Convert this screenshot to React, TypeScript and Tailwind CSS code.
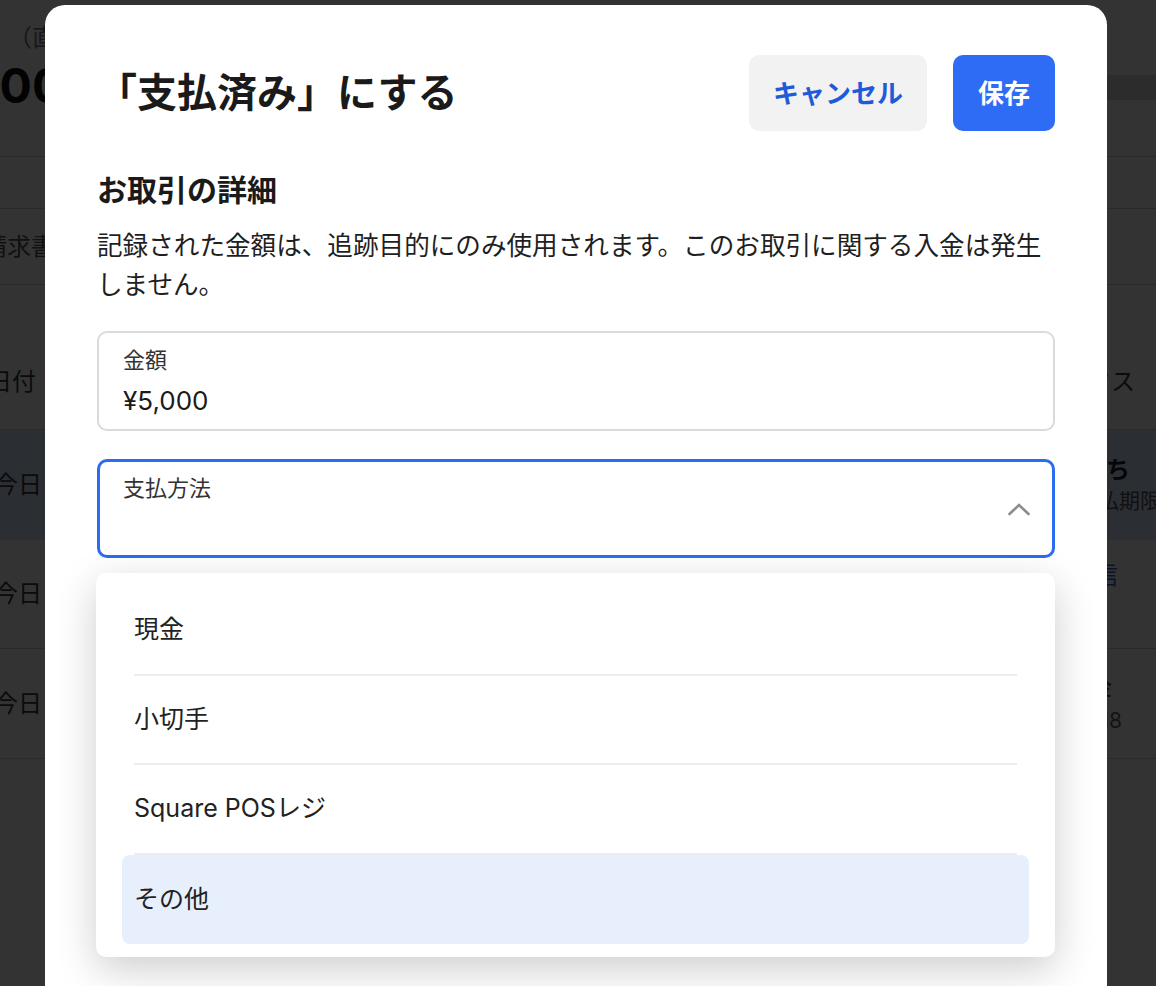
import { useState } from "react";

const FONT = "font-['Inter','Noto_Sans_CJK_JP',sans-serif]";

const paymentMethods = ["現金", "小切手", "Square POSレジ", "その他"];

function BackgroundPage() {
  return (
    <div className="w-full text-[#3a3a3a]">
      {/* Summary header */}
      <div className="flex h-[157px] justify-between border-b border-[#cfcfcf]">
        <div className="pt-[22px]">
          <p className="ml-[8px] text-[24px] leading-[32px] text-[#777]">（直近30日間）</p>
          <p className="-ml-[72px] mt-[4px] text-[48px] font-bold leading-[56px] text-[#111]">
            ¥5,000
          </p>
        </div>
        <div className="mt-[75px] h-[25px] w-[320px] bg-[#dcdcdc]" />
      </div>

      {/* Tabs */}
      <div className="h-[52px] border-b border-[#cfcfcf]" />
      <div className="flex h-[76px] items-center border-b border-[#cfcfcf]">
        <span className="-ml-[17px] text-[24px] text-[#555]">請求書</span>
      </div>

      {/* Table header */}
      <div className="mt-[49px] flex h-[96px] items-center justify-between border-b border-[#cfcfcf]">
        <span className="-ml-[12px] text-[24px]">日付</span>
        <span className="mr-[21px] text-[24px]">ステータス</span>
      </div>

      {/* Rows */}
      <div className="flex h-[110px] items-center justify-between bg-[#d6e4ff]">
        <span className="-ml-[6px] text-[24px]">今日</span>
        <div className="flex flex-col items-end">
          <span className="mr-[26px] text-[24px] font-bold leading-[32px] text-[#222]">支払待ち</span>
          <span className="-mr-[5px] whitespace-nowrap text-[21px] leading-[30px] text-[#555]">
            次回支払期限
          </span>
        </div>
      </div>
      <div className="flex h-[109px] items-center justify-between border-b border-[#cfcfcf]">
        <span className="-ml-[6px] text-[24px]">今日</span>
        <span className="mr-[38px] -mt-[36px] text-[24px] text-[#2f5fe0]">送信</span>
      </div>
      <div className="flex h-[110px] items-center justify-between border-b border-[#cfcfcf]">
        <span className="-ml-[6px] text-[24px]">今日</span>
        <div className="flex flex-col items-end">
          <span className="mr-[44px] text-[22px] font-bold leading-[34px] text-[#1f7a3a]">入金</span>
          <span className="mr-[34px] text-[21px] leading-[34px] text-[#666]">2025/03/18</span>
        </div>
      </div>
    </div>
  );
}

function ChevronUp() {
  return (
    <svg width="24" height="14" viewBox="0 0 24 14" fill="none">
      <path d="M2.5 12 L12 3 L21.5 12" stroke="#8c8c8c" strokeWidth="2.6" strokeLinecap="round" />
    </svg>
  );
}

export default function App() {
  const [selected, setSelected] = useState("その他");

  return (
    <div className={`relative h-[986px] w-full overflow-hidden bg-white ${FONT}`}>
      <BackgroundPage />

      {/* Overlay */}
      <div className="absolute inset-0 bg-black/80" />

      {/* Modal */}
      <div className="absolute left-[45px] top-[5px] min-h-[1100px] w-[1062px] rounded-[20px] bg-white px-[52px] pt-[50px]">
        {/* Header */}
        <div className="flex h-[76px] items-center justify-between">
          <h1 className="text-[40px] font-bold leading-[50px] text-[#1a1a1a]">「支払済み」にする</h1>
          <div className="flex gap-[26px]">
            <button className="h-[76px] rounded-[10px] bg-[#f2f2f2] px-[24px] text-[26px] font-bold text-[#1f5ad8]">
              キャンセル
            </button>
            <button className="h-[76px] rounded-[10px] bg-[#2e6cf6] px-[25px] text-[26px] font-bold text-white">
              保存
            </button>
          </div>
        </div>

        {/* Details */}
        <h2 className="mt-[39px] text-[30px] font-bold leading-[40px] text-[#1a1a1a]">お取引の詳細</h2>
        <p className="mt-[16px] text-[25.6px] leading-[39px] text-[#1f1f1f]">
          記録された金額は、追跡目的にのみ使用されます。このお取引に関する入金は発生しません。
        </p>

        {/* Amount */}
        <div className="mt-[27px] h-[100px] rounded-[10px] border-2 border-[#dadada] px-[24px] pt-[12px]">
          <p className="text-[22px] leading-[30px] text-[#333]">金額</p>
          <p className="mt-[10px] text-[26px] leading-[32px] text-[#1a1a1a]">¥5,000</p>
        </div>

        {/* Payment method select */}
        <div className="relative mt-[28px]">
          <div className="relative h-[99px] rounded-[10px] border-[3px] border-[#2b6cf0] px-[23px] pt-[11px]">
            <p className="text-[22px] leading-[30px] text-[#333]">支払方法</p>
            <div className="absolute right-[21px] top-1/2 -translate-y-1/2">
              <ChevronUp />
            </div>
          </div>

          {/* Dropdown */}
          <div className="absolute left-[-1px] right-0 top-[114px] z-10 rounded-[10px] bg-white px-[26px] pb-[13px] pt-[13px] shadow-[0_12px_40px_rgba(0,0,0,0.2)]">
            {paymentMethods.map((m, i) => {
              const isSelected = m === selected;
              const isLast = i === paymentMethods.length - 1;
              return (
                <div
                  key={m}
                  onClick={() => setSelected(m)}
                  className={`cursor-pointer rounded-[8px] px-[12px] ${isSelected ? "bg-[#e8effc]" : ""}`}
                >
                  <div
                    className={`flex h-[89.5px] items-center text-[25px] text-[#222] ${
                      isLast || isSelected ? "" : "border-b-2 border-[#ededed]"
                    }`}
                  >
                    {m}
                  </div>
                </div>
              );
            })}
          </div>
        </div>
      </div>
    </div>
  );
}
